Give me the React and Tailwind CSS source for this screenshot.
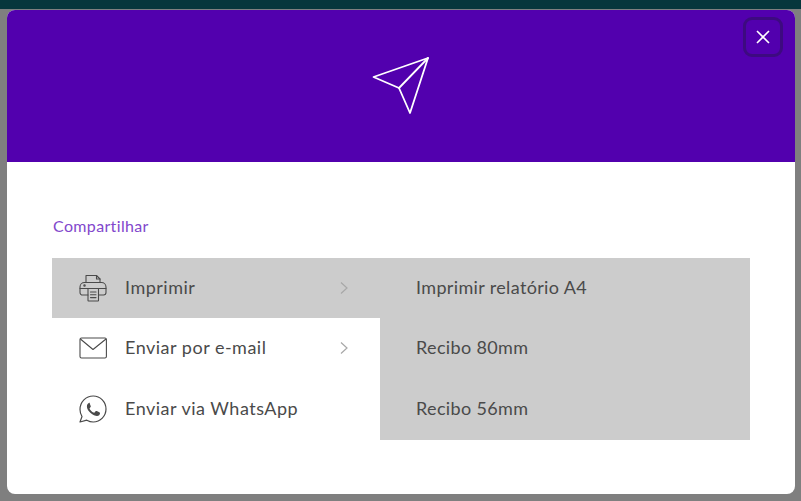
import React from "react";

const font = { fontFamily: '"Lato", "Open Sans", sans-serif' };

function PrinterIcon() {
  return (
    <svg width="28" height="28" viewBox="0 0 28 28" fill="none" stroke="#4a4a4a" strokeWidth="1.1" strokeLinecap="round" strokeLinejoin="round">
      <path d="M7 8.5V1.5H17.5L21 5V8.5" />
      <path d="M17.5 1.5V5H21" />
      <path d="M9 21H3.5C2.2 21 1 20 1 18.5V13C1 10.5 3 8.5 5.5 8.5H22.5C25 8.5 27 10.5 27 13V18.5C27 20 25.8 21 24.5 21H19.5" />
      <path d="M1 14.5H9M19.5 14.5H27" />
      <rect x="9" y="14.5" width="10.5" height="12.5" rx="0.5" />
      <path d="M11.5 18H17M11.5 20.8H17M11.5 23.6H17" />
      <circle cx="5.5" cy="11.5" r="0.7" />
    </svg>
  );
}

function MailIcon() {
  return (
    <svg width="28" height="22" viewBox="0 0 28 22" fill="none" stroke="#4a4a4a" strokeWidth="1.1" strokeLinejoin="round">
      <rect x="1" y="1" width="26.4" height="20" rx="1.5" />
      <path d="M1.4 2L14 12.5L27 2" />
    </svg>
  );
}

function WhatsappIcon() {
  return (
    <svg width="28" height="28" viewBox="0 0 28 28" fill="none">
      <path d="M1 27L3 21.5C1.8 19.5 1 17.5 1 14.5C1 7 7 1 14.2 1C21.4 1 27 7 27 14C27 21 21.4 27 14.2 27C11.8 27 9.8 26.3 7.8 25.2L1 27Z" stroke="#4a4a4a" strokeWidth="1.2" strokeLinejoin="round" />
      <path d="M10.6 7.8C9.6 7.8 7.9 9.2 7.9 11.4C7.9 13.6 9.5 16 11.6 18C13.7 20 16.4 21 18 21C19.7 21 21 19.4 21 18.4C21 17.6 20.6 17.3 19.8 16.9L17.8 16C17.2 15.8 16.8 15.9 16.4 16.4L15.5 17.5C15.2 17.8 14.9 17.8 14.5 17.6C12.9 16.8 11.5 15.5 10.7 14C10.5 13.6 10.6 13.4 10.8 13.1L11.6 12.1C11.9 11.7 11.9 11.4 11.7 11L10.9 8.9C10.7 8.3 11 7.8 10.6 7.8Z" fill="#4a4a4a" />
    </svg>
  );
}

function Chevron() {
  return (
    <svg width="8" height="12" viewBox="0 0 8 12" fill="none" stroke="#a8a8a8" strokeWidth="1.2">
      <path d="M1 0.5L7 6L1 11.5" />
    </svg>
  );
}

function ShareRow({ icon, label, active, arrow, height }) {
  return (
    <div className={`flex items-center pl-[26.5px] pr-[32px] ${height} ${active ? "bg-[#cccccc]" : "bg-white"}`}>
      <div className="w-[28px] flex justify-center shrink-0">{icon}</div>
      <span className="ml-[18.5px] mb-[2px] text-[18px] leading-[24px] tracking-[0.5px] text-[#4a4a4a]">{label}</span>
      {arrow && <div className="ml-auto flex items-center"><Chevron /></div>}
    </div>
  );
}

export default function App() {
  return (
    <div className="w-[801px] h-[501px] bg-[#7f7f7f] overflow-hidden" style={font}>
      <div className="h-[9px] bg-[#07363c]" />
      <div className="mt-px ml-[7px] w-[788px] h-[484px] bg-white rounded-[8px] overflow-hidden flex flex-col">
        <div className="relative h-[152px] bg-[#5200ae] flex items-center justify-center">
          <svg className="ml-[-1px]" width="58" height="58" viewBox="0 0 58 58" fill="none" stroke="#ffffff" strokeWidth="1.8" strokeLinejoin="round" strokeLinecap="round">
            <path d="M56 1L1.5 20L27 31L38 56L56 1Z" />
            <path d="M56 1L27 31" />
          </svg>
          <button className="absolute top-[7px] right-[12px] w-[40px] h-[40px] rounded-[9px] border-[3px] border-[#3d0a80] flex items-center justify-center">
            <svg width="14" height="14" viewBox="0 0 14 14" stroke="#ffffff" strokeWidth="1.6">
              <path d="M1 1L13 13M13 1L1 13" />
            </svg>
          </button>
        </div>
        <div className="px-[45px] pt-[54px]">
          <div className="pl-px text-[16px] leading-[20px] tracking-[0.35px] text-[#8247cc]">Compartilhar</div>
          <div className="mt-[22px] flex">
            <div className="w-[328px]">
              <ShareRow icon={<PrinterIcon />} label="Imprimir" active arrow height="h-[60px]" />
              <ShareRow icon={<MailIcon />} label="Enviar por e-mail" arrow height="h-[60px]" />
              <ShareRow icon={<WhatsappIcon />} label="Enviar via WhatsApp" height="h-[62px]" />
            </div>
            <div className="w-[370px] bg-[#cccccc] text-[18px] leading-[24px] tracking-[0.35px] text-[#4a4a4a]">
              <div className="h-[60px] pb-[2px] pl-[36px] flex items-center">Imprimir relatório A4</div>
              <div className="h-[60px] pb-[2px] pl-[36px] flex items-center">Recibo 80mm</div>
              <div className="h-[62px] pb-[2px] pl-[36px] flex items-center">Recibo 56mm</div>
            </div>
          </div>
        </div>
      </div>
    </div>
  );
}
